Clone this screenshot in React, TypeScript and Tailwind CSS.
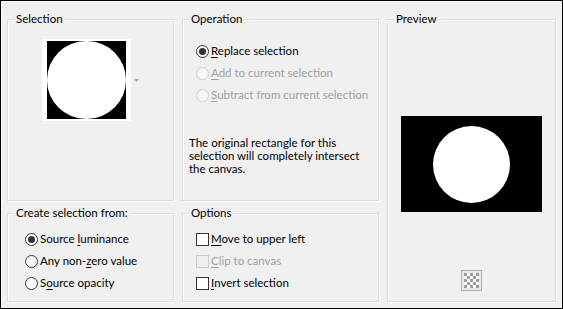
import { ReactNode } from "react";

function Group({ title, className, children }: { title: string; className?: string; children?: ReactNode }) {
    return (
        <div className={`relative border border-[#dcdcdc] shadow-[inset_1px_1px_0_#fff,1px_1px_0_#fff] ${className ?? ""}`}>
            <span className="absolute -top-[9px] left-[6px] px-[2px] bg-[#f0f0f0] leading-[16px] text-black whitespace-nowrap">
                {title}
            </span>
            {children}
        </div>
    );
}

function Radio({ checked, disabled }: { checked?: boolean; disabled?: boolean }) {
    return (
        <span
            className={`flex items-center justify-center w-[13px] h-[13px] rounded-full border ${disabled ? "border-[#d2d2d2] bg-[#f6f6f6]" : "border-[#333333] bg-white"}`}
        >
            {checked && <span className="w-[7px] h-[7px] rounded-full bg-[#333333]" />}
        </span>
    );
}

function Check({ disabled }: { disabled?: boolean }) {
    return (
        <span className={`w-[13px] h-[13px] border ${disabled ? "border-[#cccccc] bg-[#f0f0f0]" : "border-[#333333] bg-white"}`} />
    );
}

// label with the mnemonic letter underlined
function Label({ before, key1, after, disabled }: { before?: string; key1: string; after: string; disabled?: boolean }) {
    return (
        <span className={`whitespace-nowrap ${disabled ? "text-[#a0a0a0]" : "text-black"}`}>
            {before}
            <span className="underline underline-offset-2">{key1}</span>
            {after}
        </span>
    );
}

function Row({ children, pl }: { children: ReactNode; pl: string }) {
    return <div className={`flex items-center h-[22px] gap-[2px] ${pl}`}>{children}</div>;
}

export default function App() {
    return (
        <div
            className="w-[563px] h-[309px] border border-black bg-[#f0f0f0] shadow-[inset_1px_1px_0_#fff] flex gap-[8px] pt-[18px] px-[6px] pb-[6px] text-[11.5px] text-black"
            style={{ fontFamily: "Lato, 'Noto Sans', sans-serif" }}
        >
            {/* left column */}
            <div className="w-[167px] flex flex-col gap-[12px]">
                <Group title="Selection" className="h-[182px]">
                    <div className="flex items-center justify-center gap-[3px] pt-[19px]">
                        <div className="bg-white px-[5px] py-[2px]">
                            <div className="w-[79px] h-[78px] bg-black">
                                <div className="w-full h-full rounded-full bg-white" />
                            </div>
                        </div>
                        <svg width="5" height="3" viewBox="0 0 5 3">
                            <path d="M0 0h5L2.5 3z" fill="#a6a6a6" />
                        </svg>
                    </div>
                </Group>
                <Group title="Create selection from:" className="h-[89px]">
                    <div className="pt-[14px]">
                        <Row pl="pl-[17px]">
                            <Radio checked />
                            <Label before="Source " key1="l" after="uminance" />
                        </Row>
                        <Row pl="pl-[17px]">
                            <Radio />
                            <Label before="Any non-" key1="z" after="ero value" />
                        </Row>
                        <Row pl="pl-[17px]">
                            <Radio />
                            <Label before="S" key1="o" after="urce opacity" />
                        </Row>
                    </div>
                </Group>
            </div>

            {/* middle column */}
            <div className="w-[197px] flex flex-col gap-[12px]">
                <Group title="Operation" className="h-[182px]">
                    <div className="pt-[20px]">
                        <Row pl="pl-[13px]">
                            <Radio checked />
                            <Label key1="R" after="eplace selection" />
                        </Row>
                        <Row pl="pl-[13px]">
                            <Radio disabled />
                            <Label key1="A" after="dd to current selection" disabled />
                        </Row>
                        <Row pl="pl-[13px]">
                            <Radio disabled />
                            <Label key1="S" after="ubtract from current selection" disabled />
                        </Row>
                    </div>
                    <p className="mt-[30px] pl-[6px] leading-[13px] whitespace-nowrap">
                        The original rectangle for this
                        <br />
                        selection will completely intersect
                        <br />
                        the canvas.
                    </p>
                </Group>
                <Group title="Options" className="h-[89px]">
                    <div className="pt-[14px]">
                        <Row pl="pl-[13px]">
                            <Check />
                            <Label key1="M" after="ove to upper left" />
                        </Row>
                        <Row pl="pl-[13px]">
                            <Check disabled />
                            <Label key1="C" after="lip to canvas" disabled />
                        </Row>
                        <Row pl="pl-[13px]">
                            <Check />
                            <Label key1="I" after="nvert selection" />
                        </Row>
                    </div>
                </Group>
            </div>

            {/* right column */}
            <Group title="Preview" className="w-[169px] h-[283px]">
                <div className="flex flex-col items-center pt-[96px]">
                    <div className="w-[141px] h-[96px] bg-black flex items-center justify-center">
                        <div className="w-[77px] h-[77px] rounded-full bg-white" />
                    </div>
                    <div className="mt-[58px] w-[21px] h-[21px] border border-[#b0b0b0] bg-[#e8e8e8] flex items-center justify-center">
                        <div className="grid grid-cols-5 w-[15px] h-[15px]">
                            {Array.from({ length: 25 }).map((_, i) => (
                                <span
                                    key={i}
                                    className={(Math.floor(i / 5) + (i % 5)) % 2 === 0 ? "bg-[#9c9c9c]" : "bg-white"}
                                />
                            ))}
                        </div>
                    </div>
                </div>
            </Group>
        </div>
    );
}
